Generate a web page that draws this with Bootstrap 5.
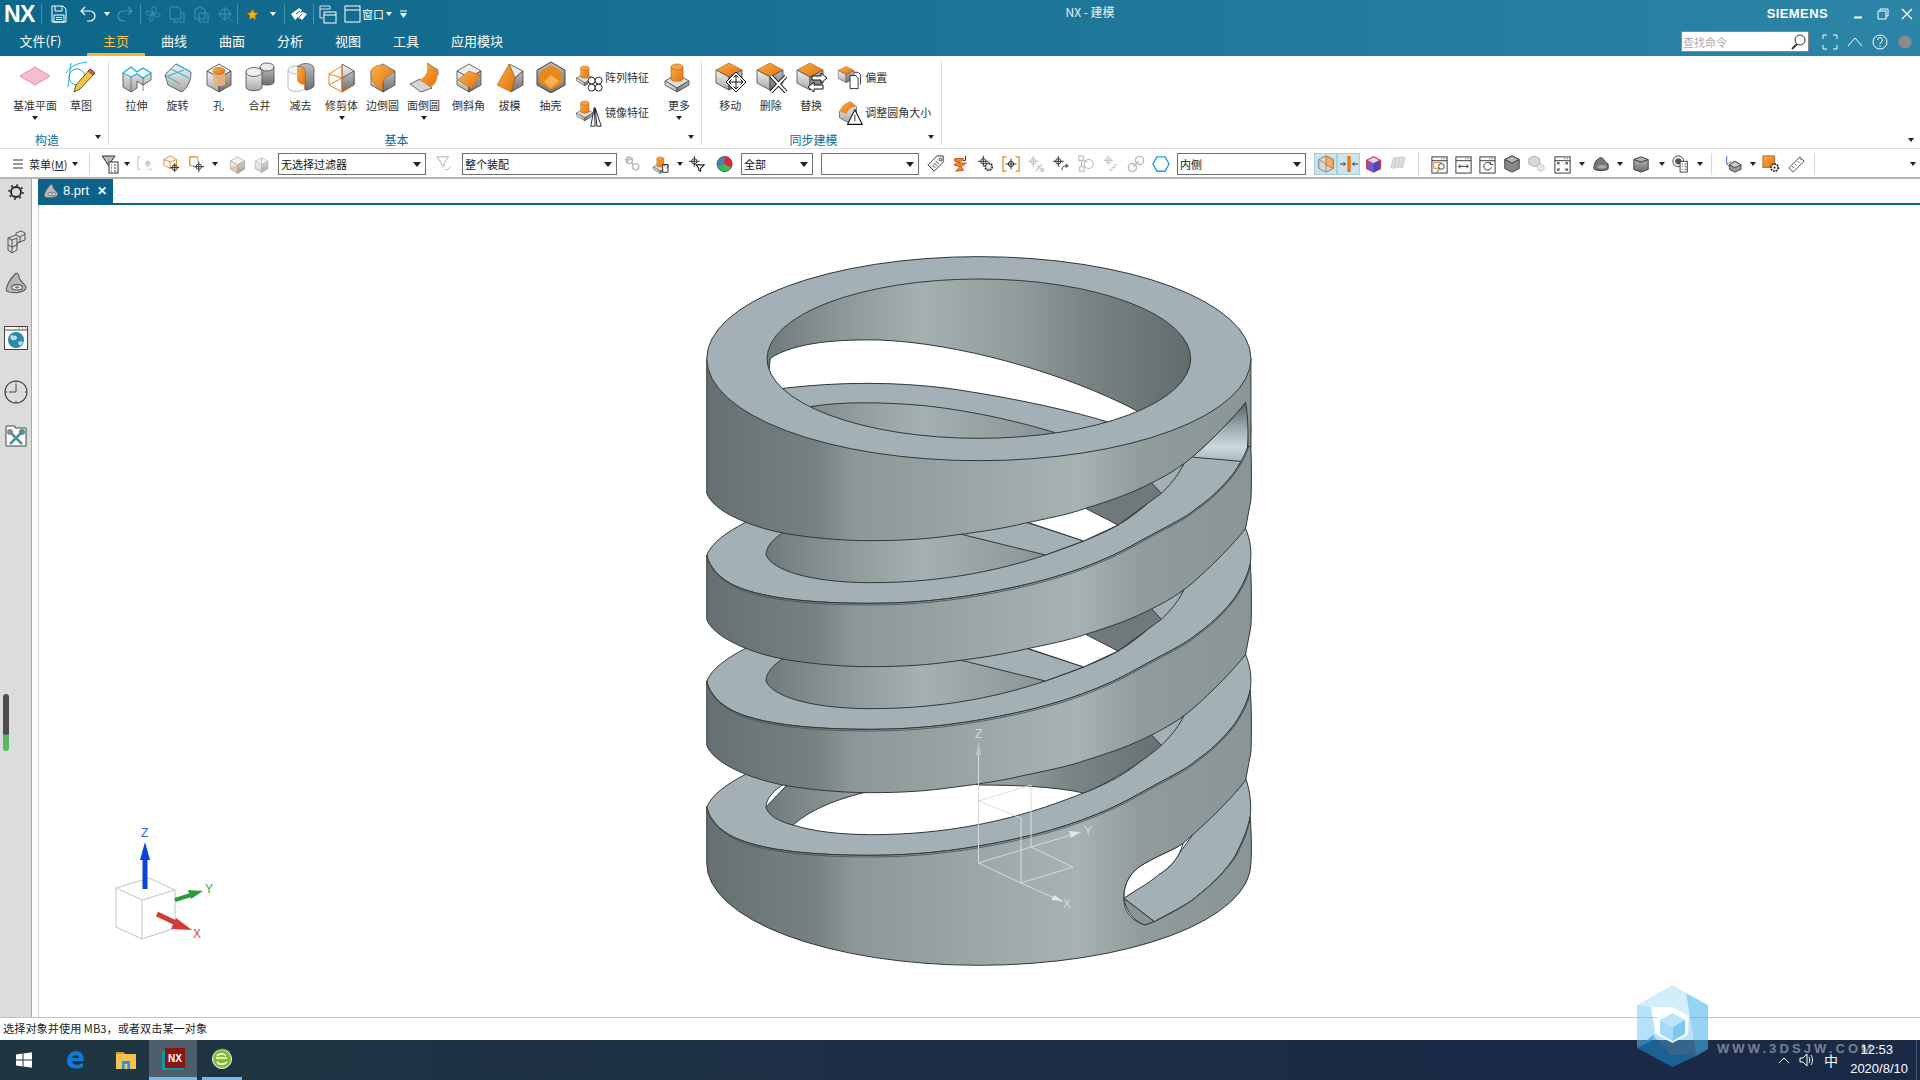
<!DOCTYPE html>
<html lang="en">
<head>
    <meta charset="UTF-8">
    <title>NX - 建模</title>
    <link href="https://cdn.jsdelivr.net/npm/bootstrap@5.3.0/dist/css/bootstrap.min.css" rel="stylesheet">
    <style>
        html, body { height: 1080px; overflow: hidden; }
        body { font-family: "Noto Sans CJK SC", "Liberation Sans", sans-serif; font-size: 11px; color: #333; background: #fff; }
        svg { display: block; flex: none; }
        .defs-only { width: 0; height: 0; position: absolute; }

        /* title + tabs */
        .app-head { height: 56px; background: linear-gradient(90deg, #0d678b, #1c7597 50%, #2c84a6); color: #fff; position: relative; }
        .title-row { height: 28px; }
        .nx-logo { width: 41px; padding-left: 4px; font: bold 23px/28px "Liberation Sans", sans-serif; letter-spacing: -.5px; }
        .qsep { width: 1px; height: 20px; background: rgba(255,255,255,.25); }
        .qi { width: 24px; height: 28px; display: flex; align-items: center; justify-content: center; }
        .qw-34 { width: 34px; } .qw-30 { width: 30px; } .qw-28 { width: 28px; } .qw-20 { width: 20px; }
        .win-label { font-size: 11px; color: #fff; width: 24px; }
        .car-w { width: 0; height: 0; border: 3px solid transparent; border-top: 4px solid #fff; border-bottom: 0; }
        .app-title { position: absolute; left: 260px; right: 0; top: 3px; text-align: center; font-size: 12px; line-height: 18px; color: #e6f2f6; pointer-events: none; }
        .brand { font: bold 13px/28px "Liberation Sans", sans-serif; letter-spacing: .4px; margin-right: 17px; }
        .win-ctl { width: 25px; height: 28px; display: flex; align-items: center; justify-content: center; }
        .win-x { width: 23px; }
        .tab-row { height: 28px; }
        .tab-row .nav-link { padding: 0; height: 28px; line-height: 25px; width: 58px; text-align: center; color: #fff; font-size: 13px; }
        .tab-row .tab-file { width: 73px; margin: 0 10px 0 4px; }
        .tab-row .tab-app { width: 84px; }
        .tab-row .nav-link.active { color: #f6c44d; border-bottom: 3px solid #f3b93c; }
        .find-box { position: relative; width: 128px; height: 21px; margin: -1px 8px 0 0; }
        .find-box .form-control { height: 21px; min-height: 0; padding: 0 20px 0 1px; border: 1px solid #888; border-radius: 0; font-size: 11px; line-height: 19px; }
        .find-box .form-control::placeholder { color: #aaa; }
        .find-box svg { position: absolute; right: 2px; top: 2px; }
        .head-i { width: 25px; display: flex; justify-content: center; margin-top: -1px; }
        .head-gap { width: 3px; }
        .ctl-gap { width: 2px; }

        /* ribbon */
        .ribbon { height: 93px; border-bottom: 1px solid #ddd; position: relative; }
        .rgroup { display: flex; flex-direction: column; border-right: 1px solid #ddd; margin: 5px 0 3px; position: relative; }
        .rg-1 { width: 109px; padding-left: 10px; }
        .rg-2 { width: 593px; padding-left: 7px; }
        .rg-3 { width: 240px; padding-left: 8px; }
        .ritems { height: 72px; display: flex; }
        .rb-item { width: 41px; height: 72px; padding: 0; border: 0; border-radius: 0; font-size: 11px; line-height: 14px; color: #333; display: flex; flex-direction: column; align-items: center; white-space: nowrap; }
        .rb-item span { margin-top: 5px; }
        .rb-wide { width: 50px; }
        .rb-sk { width: 42px; }
        .rb-more { width: 44px; margin-left: 2px; }
        .car-d { width: 0; height: 0; border: 3px solid transparent; border-top: 4px solid #222; border-bottom: 0; flex: none; }
        .rb-item .car-d { margin-top: 4px; }
        .rside { width: 80px; margin-top: -1px; padding-left: 0; }
        .rside-2 { width: 105px; margin-left: 6px; }
        .rrow { height: 35px; display: flex; align-items: center; white-space: nowrap; gap: 2px; }
        .glabel { height: 15px; line-height: 14px; text-align: center; color: #0f6c94; font-size: 12px; padding-right: 24px; }
        .gcar { position: absolute; right: 7px; bottom: 6px; }
        .rib-end { position: absolute; right: 6px; bottom: 6px; }

        /* selection bar */
        .selbar { height: 30px; padding-top: 2px; border-bottom: 2px solid #b4b4b4; }
        .sb-menu { width: 89px; padding-left: 12px; gap: 5px; font-size: 11px; color: #222; }
        .vsep { width: 1px; height: 22px; background: #d6d6d6; flex: none; }
        .tc { height: 26px; display: flex; align-items: center; justify-content: center; flex: none; }
        .u18 { width: 18px; } .u20 { width: 20px; } .u22 { width: 22px; } .u23 { width: 23px; } .u24 { width: 24px; } .u25 { width: 25px; }
        .u26 { width: 26px; } .u28 { width: 28px; } .u30 { width: 30px; } .u32 { width: 32px; }
        .tc-on { height: 22px; background: #cbe4ec; border: 1px solid #a8d0dc; }
        .combo { position: relative; height: 22px; flex: none; }
        .combo .form-select { height: 22px; padding: 0 14px 0 2px; border: 1px solid #707070; border-radius: 0; font-size: 11px; line-height: 20px; color: #111; background: #fff; appearance: none; }
        .combo::after { content: ""; position: absolute; right: 5px; top: 9px; border: 4px solid transparent; border-top: 5px solid #222; border-bottom: 0; }
        .cb-148 { width: 148px; } .cb-155 { width: 155px; } .cb-72 { width: 72px; } .cb-98 { width: 98px; } .cb-129 { width: 129px; }

        /* workspace */
        .workspace { height: 838px; }
        .side-rail { width: 32px; background: #dcdcdc; border-right: 1px solid #a8a8a8; position: relative; }
        .rail-i { display: flex; justify-content: center; }
        .rt-1 { margin-top: 5px; } .rt-2 { margin-top: 30px; } .rt-3 { margin-top: 16px; }
        .rt-4 { margin-top: 30px; } .rt-5 { margin-top: 30px; } .rt-6 { margin-top: 19px; }
        .rail-slider { position: absolute; left: 3px; top: 515px; width: 6px; height: 57px; border-radius: 3px; background: linear-gradient(#4c4c4c 70%, #5cb85c 72%); }
        .work-col { margin-left: 6px; }
        .doc-strip { height: 26px; border-bottom: 2px solid #0c6289; }
        .doc-tab { width: 75px; height: 24px; background: #0c6289; color: #fff; padding-left: 4px; font: 13px/24px "Liberation Sans", sans-serif; gap: 3px; }
        .doc-x { font-size: 12px; font-weight: bold; margin-left: 5px; }
        .view-area { height: 812px; border-left: 1px solid #d4d4d4; background: #fff; }
        .view-area svg { width: 1881px; height: 812px; }
        .view-area path { vector-effect: non-scaling-stroke; }
        .sk { stroke: #2f3739; stroke-width: 1; stroke-linejoin: round; }
        .sk2 { fill: none; stroke: #454e50; stroke-width: .8; }
        .wall { fill: url(#wallG); }
        .inner { fill: url(#innerG); }
        .face { fill: #a3b0b5; }
        .tri-txt { font: 12px "Liberation Sans", sans-serif; }
        .csys-txt { font: 12px "Liberation Sans", sans-serif; fill: #d4d8d8; }
        .csys { stroke: #d8dcdc; stroke-width: 1; fill: none; }

        /* bottom */
        .status-row { height: 23px; border-top: 1px solid #c4c4c4; padding-left: 3px; font-size: 11.2px; line-height: 21px; color: #222; }
        .task-row { height: 40px; background: linear-gradient(90deg, #1f3641, #1b2c46 60%, #1a2946); color: #fff; }
        .tk { height: 40px; display: flex; align-items: center; justify-content: center; }
        .tk-start { width: 48px; } .tk-edge { width: 54px; } .tk-files { width: 47px; }
        .tk-nx { width: 48px; background: #4d5e68; border-bottom: 3px solid #76b9ea; }
        .tk-ie { width: 40px; margin-left: 5px; border-bottom: 3px solid #76b9ea; }
        .tray { width: 150px; position: relative; height: 40px; font: 13px "Liberation Sans", sans-serif; }
        .tray-ic { position: absolute; left: 8px; top: 12px; gap: 9px; }
        .tray-han { font: 14px/16px "Noto Sans CJK SC", sans-serif; }
        .clock-t { position: absolute; right: 27px; top: 2px; line-height: 16px; }
        .clock-d { position: absolute; right: 12px; top: 21px; line-height: 16px; }
        .desk-edge { position: absolute; right: 3px; top: 0; width: 1px; height: 40px; background: #4a586b; }
        .mark-hex { position: absolute; left: 1637px; top: 985px; pointer-events: none; }
        .mark-url { position: absolute; left: 1717px; top: 1041px; font: bold 13px/16px "Liberation Sans", sans-serif; letter-spacing: 3.1px; color: rgba(255,255,255,.42); pointer-events: none; white-space: nowrap; }
    </style>
</head>
<body>
<svg class="defs-only" aria-hidden="true">
    <defs>
        <linearGradient id="gy" x1="0" y1="0" x2="0" y2="1"><stop offset="0" stop-color="#f4f4f4"/><stop offset="1" stop-color="#a8a8a8"/></linearGradient>
        <linearGradient id="gd" x1="0" y1="0" x2="0" y2="1"><stop offset="0" stop-color="#bdbdbd"/><stop offset="1" stop-color="#6e6e6e"/></linearGradient>
        <linearGradient id="og" x1="0" y1="0" x2="1" y2="1"><stop offset="0" stop-color="#f9b04a"/><stop offset="1" stop-color="#e46f0c"/></linearGradient>
        <linearGradient id="wallG" gradientUnits="userSpaceOnUse" x1="70" y1="0" x2="1492" y2="0">
            <stop offset="0" stop-color="#667071"/><stop offset=".2" stop-color="#778182"/><stop offset=".27" stop-color="#8d9798"/>
            <stop offset=".45" stop-color="#98a3a4"/><stop offset=".68" stop-color="#a7b2b3"/><stop offset=".8" stop-color="#909b9c"/><stop offset="1" stop-color="#8a9596"/>
        </linearGradient>
        <linearGradient id="innerG" gradientUnits="userSpaceOnUse" x1="228" y1="0" x2="1335" y2="0">
            <stop offset="0" stop-color="#6f7a7b"/><stop offset=".17" stop-color="#8c9697"/><stop offset=".36" stop-color="#a5b1b1"/>
            <stop offset=".62" stop-color="#8f9899"/><stop offset=".75" stop-color="#7a8485"/><stop offset="1" stop-color="#626c6d"/>
        </linearGradient>
        <linearGradient id="darkG" gradientUnits="userSpaceOnUse" x1="780" y1="0" x2="1240" y2="0">
            <stop offset="0" stop-color="#a0abac"/><stop offset=".5" stop-color="#7c8687"/><stop offset="1" stop-color="#687273"/>
        </linearGradient>
        <linearGradient id="slitG" gradientUnits="userSpaceOnUse" x1="0" y1="487" x2="0" y2="665">
            <stop offset="0" stop-color="#555f60"/><stop offset=".45" stop-color="#9fb0b4"/><stop offset=".75" stop-color="#ccd9de"/><stop offset="1" stop-color="#a8b6bb"/>
        </linearGradient>

        <g id="cube-g"><polygon points="16,3 28,10 16,17 4,10" fill="#ececec" stroke="#444" stroke-width=".8"/><polygon points="4,10 16,17 16,31 4,24" fill="url(#gy)" stroke="#444" stroke-width=".8"/><polygon points="16,17 28,10 28,24 16,31" fill="url(#gd)" stroke="#444" stroke-width=".8"/></g>
        <g id="cube-o"><polygon points="13,2 26,9 13,16 0,9" fill="url(#og)" stroke="#a85a10" stroke-width=".6" transform="translate(2 0)"/><polygon points="2,9 15,16 15,29 2,22" fill="url(#gy)" stroke="#444" stroke-width=".8"/><polygon points="15,16 28,9 28,22 15,29" fill="url(#gd)" stroke="#444" stroke-width=".8"/></g>
        <g id="block-cyl"><polygon points="2,20 14,13 26,20 14,27" fill="#ddd" stroke="#444" stroke-width=".8"/><polygon points="2,20 14,27 14,31 2,24" fill="url(#gy)" stroke="#444" stroke-width=".8"/><polygon points="14,27 26,20 26,24 14,31" fill="url(#gd)" stroke="#444" stroke-width=".8"/><path d="M8 6v12c0 3 12 3 12 0V6z" fill="url(#og)" stroke="#a85a10" stroke-width=".6"/><ellipse cx="14" cy="6" rx="6" ry="3" fill="#f6a33a" stroke="#a85a10" stroke-width=".6"/></g>

        <symbol id="r-plane" viewBox="0 0 32 32"><polygon points="1,15 16,6 31,15 16,24" fill="#f7bcd2" stroke="#e88aaa"/></symbol>
        <symbol id="r-sketch" viewBox="0 0 32 32"><path d="M1 12C6 5 12 2 22 1M6 2 3 26" fill="none" stroke="#17b3da"/><circle cx="12" cy="16" r="8" fill="none" stroke="#17b3da"/><polygon points="25,8 30,12 15,28 9,31 11,24" fill="#f5c63c" stroke="#333" stroke-width=".8"/><polygon points="25,8 30,12 28,14 23,10" fill="#e55" stroke="#333" stroke-width=".6"/></symbol>
        <symbol id="r-extrude" viewBox="0 0 32 32"><path d="M2 12v14l8 5 6-4v-7l6 4 8-5V12L22 7l-6 4-6-5z" fill="url(#gy)" stroke="#444" stroke-width=".8"/><path d="M2 12 10 6l6 5 6-4 8 5-8 5-6-4-6 3z" fill="#eef8fb" stroke="#19b3d9" stroke-width="1.100"/><path d="M10 31V16M22 30V17" stroke="#555" stroke-width=".7"/></symbol>
        <symbol id="r-revolve" viewBox="0 0 32 32"><path d="M3 14C8 8 11 6 14 3l15 8c0 10-4 16-9 20L6 24z" fill="url(#gy)" stroke="#444" stroke-width=".8"/><path d="M6 15 22 9M9 8l18 9M14 3l15 8M3 14l15 9" fill="none" stroke="#19b3d9"/></symbol>
        <symbol id="r-hole" viewBox="0 0 32 32"><use href="#cube-g"/><path d="M10 10v13c0 3 12 3 12 0V10z" fill="#e8b27c" opacity=".9"/><ellipse cx="16" cy="10" rx="6" ry="3.500" fill="url(#og)" stroke="#a85a10" stroke-width=".5"/></symbol>
        <symbol id="r-unite" viewBox="0 0 32 32"><path d="M16 6v15c0 4 14 4 14 0V6z" fill="url(#gd)" stroke="#444" stroke-width=".8"/><ellipse cx="23" cy="6" rx="7" ry="4" fill="#e8e8e8" stroke="#444" stroke-width=".8"/><path d="M2 11v15c0 5 16 5 16 0V11z" fill="url(#gy)" stroke="#444" stroke-width=".8"/><ellipse cx="10" cy="11" rx="8" ry="4.500" fill="#f0f0f0" stroke="#444" stroke-width=".8"/></symbol>
        <symbol id="r-subtract" viewBox="0 0 32 32"><path d="M3 9v17c0 6 17 6 17 0V9z" fill="#fff" stroke="#bbb"/><ellipse cx="11" cy="9" rx="8" ry="4" fill="#f4f4f4" stroke="#bbb"/><path d="M12 6c8-7 18-2 17 2v17c-1 2-5 4-9 4V10c0-3-3-5-8-4z" fill="url(#gd)" stroke="#444" stroke-width=".7"/><path d="M12 6c5-1 8 2 8 5v13c-2 0-8-2-8-5z" fill="url(#og)"/></symbol>
        <symbol id="r-trim" viewBox="0 0 32 32"><polygon points="16,3 28,10 28,24 16,17" fill="url(#gy)" stroke="#444" stroke-width=".8"/><polygon points="16,17 28,10 28,24 16,31" fill="url(#gd)" stroke="#444" stroke-width=".8"/><path d="M3 13 16 5v12L3 24zM3 13l13 4M3 24l13 7 12-7M16 17v14" fill="none" stroke="#e8811c"/></symbol>
        <symbol id="r-eblend" viewBox="0 0 32 32"><use href="#cube-g"/><path d="M4 12C4 6 10 4 15 4l13 7-9 5c-3 2-4 8-3 13-7-1-12-10-12-17z" fill="url(#og)" stroke="#a85a10" stroke-width=".5"/></symbol>
        <symbol id="r-fblend" viewBox="0 0 32 32"><polygon points="2,23 12,18 24,27 13,31" fill="#d6d6d6" stroke="#444" stroke-width=".8"/><polygon points="19,2 30,9 30,14 24,8" fill="#ddd" stroke="#444" stroke-width=".8"/><path d="M19 2c1 10-1 14-8 17l12 7c6-4 7-10 7-17z" fill="url(#og)"/></symbol>
        <symbol id="r-chamfer" viewBox="0 0 32 32"><use href="#cube-g"/><polygon points="5,19 16,10 27,14 19,28" fill="url(#og)" stroke="#a85a10" stroke-width=".5"/></symbol>
        <symbol id="r-draft" viewBox="0 0 32 32"><polygon points="15,3 29,10 21,17" fill="#e8e8e8" stroke="#444" stroke-width=".8"/><polygon points="21,17 29,10 29,24 17,31" fill="url(#gd)" stroke="#444" stroke-width=".8"/><polygon points="15,3 21,17 17,31 3,24" fill="url(#og)" stroke="#a85a10" stroke-width=".5"/></symbol>
        <symbol id="r-shell" viewBox="0 0 32 32"><polygon points="16,1 30,9 30,24 16,32 2,24 2,9" fill="url(#gd)" stroke="#444"/><polygon points="16,4 27,11 27,22 16,29 5,22 5,11" fill="#e88818"/><polygon points="9,21 16,14 24,20 16,27" fill="#f8b058"/></symbol>
        <symbol id="r-pattern" viewBox="0 0 32 32"><use href="#block-cyl" transform="scale(.8)"/><g fill="#fff" stroke="#111"><circle cx="19" cy="19" r="4"/><circle cx="27" cy="19" r="4"/><circle cx="19" cy="27" r="4"/><circle cx="27" cy="27" r="4"/></g></symbol>
        <symbol id="r-mirror" viewBox="0 0 32 32"><use href="#block-cyl" transform="scale(.8)"/><path d="M18 31 22 10l1 21zM25 31l-2-21 7 21z" fill="#fff" stroke="#111"/></symbol>
        <symbol id="r-more" viewBox="0 0 32 32"><use href="#block-cyl"/></symbol>
        <symbol id="r-move" viewBox="0 0 32 32"><use href="#cube-o"/><polygon points="22,11 32,21 22,31 12,21" fill="#fff" stroke="#111"/><path d="M22 14v14M15 21h14M19.500 16.500 22 14l2.500 2.500M19.500 25.500 22 28l2.500-2.500M17.500 18.500 15 21l2.500 2.500M26.500 18.500 29 21l-2.500 2.500" fill="none" stroke="#111"/></symbol>
        <symbol id="r-del" viewBox="0 0 32 32"><use href="#cube-o"/><path d="M16 15 31 31M31 15 16 31" stroke="#111" stroke-width="4"/><path d="M16 15 31 31M31 15 16 31" stroke="#fff" stroke-width="2"/></symbol>
        <symbol id="r-rep" viewBox="0 0 32 32"><use href="#cube-o"/><path d="M17 15h9v-3l6 5-6 5v-3h-9zM28 24h-9v-3l-6 5 6 5v-3h9z" fill="#fff" stroke="#111"/></symbol>
        <symbol id="r-offset" viewBox="0 0 32 32"><use href="#cube-o" transform="scale(.75)"/><path d="M16 13h7l3 3v13h-10z" fill="#fff" stroke="#111"/><path d="M21 9h5l3 3v12" fill="none" stroke="#111"/></symbol>
        <symbol id="r-resize" viewBox="0 0 32 32"><polygon points="3,14 16,2 24,8 24,16 14,28 3,22" fill="url(#gy)" stroke="#444" stroke-width=".8"/><path d="M3 14C4 9 10 3 16 2l7 6C18 9 13 12 12 17z" fill="url(#og)"/><polygon points="22,12 31,30 13,30" fill="#fff" stroke="#111" stroke-width="1.300"/><path d="M22 18v8" stroke="#111"/></symbol>

        <symbol id="t-flist" viewBox="0 0 20 20"><path d="M1 2h13L9 9v3L6 10V9z" fill="#bbb" stroke="#333"/><rect x="8" y="8" width="9" height="11" fill="#fff" stroke="#333"/><path d="M10 11h1M13 11h2M10 14h1M13 14h2M10 17h1M13 17h2" stroke="#333"/></symbol>
        <symbol id="t-bkt" viewBox="0 0 20 20"><g fill="none" stroke="#bbb"><path d="M4 2H1v14h3M9 9h6M12 6v7"/><circle cx="12" cy="9.500" r="2.500"/><path d="M12 16c3 1 4 0 5-2"/></g></symbol>
        <symbol id="t-ocross" viewBox="0 0 20 20"><g fill="none" stroke="#e8811c"><path d="M8 1 15 5v7l-7 3-7-4V5zM1 5l7 3 7-3M8 8v7"/></g><g fill="none" stroke="#222"><circle cx="13" cy="14" r="3"/><path d="M13 9v10M8 14h10"/></g></symbol>
        <symbol id="t-scross" viewBox="0 0 20 20"><path d="M11 2H2v10" fill="none" stroke="#e8811c" stroke-width="1.400"/><path d="M2 12h5M11 2v5" fill="none" stroke="#e8811c"/><g fill="none" stroke="#222"><circle cx="12" cy="13" r="3"/><path d="M12 7v12M6 13h12"/></g></symbol>
        <symbol id="t-cube-fade" viewBox="0 0 32 32"><g opacity=".65"><use href="#cube-g"/><path d="M6 24 26 12" stroke="#e8811c" stroke-width="2"/></g></symbol>
        <symbol id="t-cube-fade2" viewBox="0 0 32 32"><g opacity=".6"><use href="#cube-g"/><path d="M16 4v26" stroke="#e8811c" stroke-width="2"/></g></symbol>
        <symbol id="t-funnel" viewBox="0 0 20 20"><path d="M2 2h13L10 9v4L7 11V9z" fill="none" stroke="#aaa"/><path d="M17 13c-1 3-4 4-6 3" fill="none" stroke="#aaa"/></symbol>
        <symbol id="t-chain" viewBox="0 0 20 20"><g fill="none" stroke="#bbb" stroke-width="1.500"><circle cx="6" cy="6" r="3.500"/><circle cx="13" cy="13" r="3.500"/><path d="M8 8l3 3M4 1v9M1 5h9"/></g></symbol>
        <symbol id="t-blockdoc" viewBox="0 0 32 32"><use href="#block-cyl"/><path d="M18 16h9v13h-9z" fill="#fff" stroke="#111" stroke-width="1.400"/><path d="M24 22a3 3 0 1 0-3-3" fill="none" stroke="#111"/></symbol>
        <symbol id="t-crossf" viewBox="0 0 20 20"><g fill="none" stroke="#222"><circle cx="7" cy="7" r="3"/><path d="M7 1v12M1 7h12"/><path d="M9 11h9l-4 4v3l-2-1v-2z" stroke-width="1.200"/></g></symbol>
        <symbol id="t-pie" viewBox="0 0 20 20"><circle cx="10" cy="10" r="9" fill="#4d84a8"/><path d="M10 10V1a9 9 0 0 1 7.800 13.500z" fill="#e8213a"/><path d="M10 10l7.800 4.500A9 9 0 0 1 2.200 14.500z" fill="#2fc44a"/><circle cx="10" cy="10" r="9" fill="none" stroke="#444" stroke-width=".6"/></symbol>
        <symbol id="t-tag" viewBox="0 0 20 20"><path d="M1 11 11 1h7v7L8 18z" fill="#f1f1f1" stroke="#333"/><circle cx="15" cy="5" r="1.500" fill="none" stroke="#333"/><path d="M6 11l3 3M8 9l3 3M10 7l3 3" stroke="#333"/></symbol>
        <symbol id="t-curve" viewBox="0 0 20 20"><path d="M3 4h10l-5 5h8l-6 4 3 4-9 1 5-5-7-2 6-4H3z" fill="#f28a1c" stroke="#d6401c"/><path d="M15 1v5h-3" fill="none" stroke="#222"/></symbol>
        <symbol id="t-gearx" viewBox="0 0 20 20"><g fill="none" stroke="#222"><circle cx="7" cy="7" r="3"/><path d="M7 1v12M1 7h12"/></g><circle cx="13" cy="13" r="4" fill="#ccc" stroke="#222" stroke-width="1.800" stroke-dasharray="2 1"/><circle cx="13" cy="13" r="1.500" fill="#fff"/></symbol>
        <symbol id="t-brk" viewBox="0 0 20 20"><path d="M5 2H1v16h4M15 2h4v16h-4" fill="none" stroke="#e8811c" stroke-width="1.300"/><g fill="none" stroke="#222"><circle cx="10" cy="10" r="3"/><path d="M10 4v12M4 10h12"/></g></symbol>
        <symbol id="t-xmove" viewBox="0 0 20 20"><g fill="none" stroke="#bbb"><circle cx="7" cy="7" r="3"/><path d="M7 1v12M1 7h12M11 11l7 7M14 18h4v-4M17 10l-7 8" stroke-width="1.200"/></g></symbol>
        <symbol id="t-xturn" viewBox="0 0 20 20"><g fill="none" stroke="#222"><circle cx="7" cy="7" r="3"/><path d="M7 1v12M1 7h12M11 17c0-4 2-5 6-5M15 10l3 2-3 2"/></g></symbol>
        <symbol id="t-nodes" viewBox="0 0 20 20"><g fill="none" stroke="#bbb" stroke-width="1.200"><rect x="2" y="1" width="5" height="5"/><circle cx="13" cy="10" r="5"/><rect x="3" y="13" width="5" height="5"/><path d="M5 6v7M7 5l4 3"/></g></symbol>
        <symbol id="t-xstep" viewBox="0 0 20 20"><g fill="none" stroke="#bbb"><circle cx="7" cy="6" r="3"/><path d="M7 1v10M2 6h10M8 17h3v-3h3v-3h3"/></g></symbol>
        <symbol id="t-link" viewBox="0 0 20 20"><g fill="none" stroke="#bbb" stroke-width="1.600"><circle cx="6" cy="14" r="4.500"/><circle cx="14" cy="6" r="4.500"/><path d="M7 13l6-6"/></g></symbol>
        <symbol id="t-hex" viewBox="0 0 20 20"><polygon points="5.500,2 14.500,2 19,10 14.500,18 5.500,18 1,10" fill="#fff" stroke="#12a7d8" stroke-width="1.500"/></symbol>
        <symbol id="t-corner" viewBox="0 0 20 20"><polygon points="10,1 18,5 18,15 10,19 2,15 2,5" fill="#d9d9d9" stroke="#777"/><path d="M10 1l8 4v10l-8-4z" fill="#f1b06a" stroke="#d86c10"/><path d="M2 5l8 5v9" fill="none" stroke="#888"/></symbol>
        <symbol id="t-midbar" viewBox="0 0 20 20"><rect x="8" y="1" width="4" height="18" fill="#f07d10"/><path d="M0 10h6M14 10h6M4 8l2 2-2 2M16 8l-2 2 2 2" fill="none" stroke="#222"/></symbol>
        <symbol id="t-redcube" viewBox="0 0 20 20"><polygon points="10,1 18,5 18,15 10,19 2,15 2,5" fill="#6b5fd6" stroke="#e8213a" stroke-width="1.300"/><polygon points="2,5 10,1 18,5 10,9" fill="#cfd8f5" stroke="#e8213a"/><polygon points="10,9 18,5 18,15 10,19" fill="#3f4fc0" stroke="#e8213a"/></symbol>
        <symbol id="t-sheet" viewBox="0 0 20 20"><path d="M5 3c5 1 9-2 13 0l-3 11c-4-2-8 2-13 0z" fill="#ddd" stroke="#c8c8c8"/><path d="M8 3 6 14M12 3l-2 11" stroke="#c8c8c8"/></symbol>
        <g id="win-frame"><rect x="2" y="2" width="16" height="17" fill="#fff" stroke="#333"/><path d="M2 6h16" stroke="#333"/><path d="M12 4h1M14.500 4h1" stroke="#333"/></g>
        <symbol id="t-w-zoom" viewBox="0 0 20 20"><use href="#win-frame"/><rect x="4" y="8" width="8" height="6" fill="none" stroke="#e8811c"/><circle cx="12" cy="12" r="3" fill="#fff" stroke="#333"/><path d="M10 15l-3 3" stroke="#333"/></symbol>
        <symbol id="t-w-pan" viewBox="0 0 20 20"><use href="#win-frame"/><path d="M5 12h10M7 10l-2 2 2 2M13 10l2 2-2 2" fill="none" stroke="#333"/></symbol>
        <symbol id="t-w-rot" viewBox="0 0 20 20"><use href="#win-frame"/><path d="M13 9a4 4 0 1 0 1 4M13 7v3h3" fill="none" stroke="#333"/></symbol>
        <symbol id="t-cubed" viewBox="0 0 20 20"><polygon points="10,1 18,5 18,15 10,19 2,15 2,5" fill="#888" stroke="#333"/><polygon points="2,5 10,1 18,5 10,9" fill="#b8b8b8" stroke="#333"/></symbol>
        <symbol id="t-cubes" viewBox="0 0 20 20"><g opacity=".45"><polygon points="7,1 13,4 13,10 7,13 1,10 1,4" fill="#aaa" stroke="#444"/><circle cx="14" cy="14" r="4" fill="#ccc" stroke="#444" stroke-dasharray="2 1"/></g></symbol>
        <symbol id="t-w-fit" viewBox="0 0 20 20"><use href="#win-frame"/><path d="M5 10V8h2M13 8h2v2M5 14v2h2M13 16h2v-2M7 10l-2-2M13 10l2-2M7 14l-2 2M13 14l2 2" fill="none" stroke="#333"/></symbol>
        <symbol id="t-shade" viewBox="0 0 20 20"><path d="M2 15C2 9 6 3 10 3c3 0 4 5 8 7v5c0 3-16 3-16 0z" fill="#777" stroke="#333"/><ellipse cx="11" cy="13" rx="5" ry="2" fill="#aaa"/></symbol>
        <symbol id="t-cyl" viewBox="0 0 20 20"><path d="M2 5v11l8 3 8-3V5l-8-3z" fill="url(#gd)" stroke="#333"/><path d="M2 5l8 3 8-3" fill="none" stroke="#333"/></symbol>
        <symbol id="t-eyelist" viewBox="0 0 20 20"><circle cx="7" cy="7" r="6" fill="#fff" stroke="#333"/><circle cx="7" cy="7" r="3.500" fill="#555"/><rect x="9" y="7" width="8" height="12" fill="#fff" stroke="#333"/><path d="M11 10h1M14 10h2M11 13h1M14 13h2M11 16h1M14 16h2" stroke="#333"/></symbol>
        <symbol id="t-axis" viewBox="0 0 20 20"><path d="M3 1v9" stroke="#2a63e6"/><path d="M3 10l6-3" stroke="#2fb84a"/><path d="M3 10l5 4" stroke="#e8213a"/><polygon points="12,7 19,11 19,16 12,19 6,16 6,11" fill="#999" stroke="#444"/><polygon points="6,11 12,7 19,11 12,14" fill="#ccc" stroke="#444"/></symbol>
        <symbol id="t-ogear" viewBox="0 0 20 20"><rect x="1" y="1" width="13" height="13" fill="url(#og)" stroke="#c45f08"/><circle cx="14" cy="14" r="4" fill="#fff" stroke="#222" stroke-width="2" stroke-dasharray="2 1"/><circle cx="14" cy="14" r="1.200" fill="#222"/></symbol>
        <symbol id="t-ruler" viewBox="0 0 20 20"><path d="M1 14 14 1l5 5L6 19z" fill="#fff" stroke="#333"/><path d="M5 12l2 2M8 9l2 2M11 6l2 2M14 3l2 2" stroke="#333"/></symbol>

        <symbol id="t-part" viewBox="0 0 24 24"><path d="M3 19 C3 14 7 8 12 3c2 0 3 2 3 5l6 7c1 3-2 5-8 6-5 0-9 0-10-2z" fill="#b9b9b9" stroke="#555"/><ellipse cx="13" cy="16" rx="5" ry="2.500" fill="#e8e8e8" stroke="#555"/><ellipse cx="13" cy="16" rx="2" ry="1" fill="#4d84a8"/></symbol>
    </defs>
</svg>

<header class="app-head">
    <div class="title-row d-flex align-items-center">
        <div class="nx-logo">NX</div>
        <div class="qsep"></div>
        <div class="qi qw-34"><svg width="16" height="18" viewBox="0 0 16 18"><path d="M1 1h11l3 3v13H1z" fill="none" stroke="#fff"/><path d="M4 1v5h7V1M3 10h10v7H3z" fill="none" stroke="#fff"/><path d="M5 12.500h6M5 14.500h6" stroke="#fff"/></svg></div>
        <div class="qi"><svg width="18" height="16" viewBox="0 0 18 16"><path d="M2 5h9a5 5 0 0 1 0 10H8M6 1 2 5l4 4" fill="none" stroke="#fff" stroke-width="1.200"/></svg></div>
        <div class="car-w ms-1"></div>
        <div class="qi qw-30"><svg width="18" height="16" viewBox="0 0 18 16"><path d="M16 5H7a5 5 0 0 0 0 10h3M12 1l4 4-4 4" fill="none" stroke="#3f95b6" stroke-width="1.200"/></svg></div>
        <div class="qsep"></div>
        <div class="qi"><svg width="16" height="16" viewBox="0 0 16 16"><g fill="none" stroke="#3f95b6"><path d="M8 8C6 2 7 1 9 1s3 2-1 7c5-2 7-1 7 1s-3 3-7-1c1 5 0 7-2 7S3 13 8 8C3 10 1 9 1 7s3-3 7 1z"/></g></svg></div>
        <div class="qi"><svg width="16" height="17" viewBox="0 0 16 17"><path d="M1 1h8l3 3v9H1zM5 13v3h10V7h-3" fill="none" stroke="#3f95b6"/></svg></div>
        <div class="qi"><svg width="16" height="17" viewBox="0 0 16 17"><path d="M2 3h3V1h4v2h3v10H2zM6 7h9v9H6z" fill="none" stroke="#3f95b6"/></svg></div>
        <div class="qi"><svg width="17" height="17" viewBox="0 0 17 17"><g fill="none" stroke="#3f95b6"><circle cx="8" cy="8" r="5"/><path d="M8 1v14M1 8h14M11 11l5 5"/></g></svg></div>
        <div class="qsep"></div>
        <div class="qi qw-28"><svg width="13" height="13" viewBox="0 0 20 20"><polygon points="10,1 12.600,7 19,7.500 14,12 15.600,18.500 10,15 4.400,18.500 6,12 1,7.500 7.400,7" fill="#f6b31a" stroke="#8a5a00"/></svg></div>
        <div class="car-w ms-1"></div>
        <div class="qsep ms-2"></div>
        <div class="qi qw-28"><svg width="18" height="16" viewBox="0 0 18 16"><path d="M1 8 9 2l3 2-2 3 3-1 4 2-5 6-4-3-3 3z" fill="#fff"/><path d="M6 8l4-3M9 11l3-3" stroke="#0d678b"/></svg></div>
        <div class="qsep"></div>
        <div class="qi qw-28"><svg width="18" height="19" viewBox="0 0 18 19"><path d="M1 1h10v3M1 1v12h3M1 4h10" fill="none" stroke="#d4e6ec"/><rect x="5" y="7" width="12" height="11" fill="none" stroke="#fff"/><path d="M5 10h12" stroke="#fff"/></svg></div>
        <div class="qi qw-20"><svg width="17" height="18" viewBox="0 0 17 18"><rect x="1" y="1" width="15" height="16" fill="none" stroke="#fff"/><path d="M1 5h15" stroke="#fff"/></svg></div>
        <div class="win-label">窗口</div>
        <div class="car-w"></div>
        <div class="ms-2"><svg width="7" height="8" viewBox="0 0 7 8"><path d="M0 1h7" stroke="#fff"/><path d="M0 3h7L3.500 8z" fill="#fff"/></svg></div>
        <div class="app-title">NX - 建模</div>
        <div class="brand ms-auto">SIEMENS</div>
        <div class="win-ctl"><svg width="10" height="10" viewBox="0 0 10 10"><path d="M1 8.500h8" stroke="#fff" stroke-width="2"/></svg></div>
        <div class="win-ctl"><svg width="12" height="12" viewBox="0 0 12 12"><path d="M3 3V1h8v7H9M1 3h8v8H1z" fill="none" stroke="#fff"/></svg></div>
        <div class="win-ctl win-x"><svg width="12" height="12" viewBox="0 0 12 12"><path d="M1 1l10 10M11 1 1 11" stroke="#fff" stroke-width="1.300"/></svg></div>
        <div class="ctl-gap"></div>
    </div>
    <div class="tab-row d-flex align-items-center">
        <nav class="nav flex-nowrap">
            <a class="nav-link tab-file" href="#">文件(F)</a>
            <a class="nav-link active" href="#">主页</a>
            <a class="nav-link" href="#">曲线</a>
            <a class="nav-link" href="#">曲面</a>
            <a class="nav-link" href="#">分析</a>
            <a class="nav-link" href="#">视图</a>
            <a class="nav-link" href="#">工具</a>
            <a class="nav-link tab-app" href="#">应用模块</a>
        </nav>
        <div class="find-box ms-auto">
            <input class="form-control" type="text" placeholder="查找命令">
            <svg width="17" height="17" viewBox="0 0 17 17"><circle cx="10" cy="7" r="5" fill="#fff" stroke="#333"/><path d="M7 11l-5 5" stroke="#333" stroke-width="1.800"/></svg>
        </div>
        <div class="head-i"><svg width="16" height="16" viewBox="0 0 16 16"><path d="M1 5V1h4M11 1h4v4M15 11v4h-4M5 15H1v-4" fill="none" stroke="#fff"/></svg></div>
        <div class="head-i"><svg width="16" height="10" viewBox="0 0 16 10"><path d="M1 9l7-8 7 8" fill="none" stroke="#fff"/></svg></div>
        <div class="head-i"><svg width="16" height="16" viewBox="0 0 16 16"><circle cx="8" cy="8" r="7" fill="none" stroke="#fff"/><path d="M5.500 6a2.500 2.500 0 1 1 3.500 2.300c-.8.400-1 .8-1 1.700M8 11.500v1.500" fill="none" stroke="#fff"/></svg></div>
        <div class="head-i"><svg width="14" height="14" viewBox="0 0 14 14"><circle cx="7" cy="7" r="6.500" fill="#8c8c8c"/></svg></div>
        <div class="head-gap"></div>
    </div>
</header>

<section class="ribbon d-flex">
    <div class="rgroup rg-1">
        <div class="ritems">
            <button class="btn rb-item rb-wide" type="button"><svg width="32" height="32"><use href="#r-plane"/></svg><span>基准平面</span><i class="car-d"></i></button>
            <button class="btn rb-item rb-sk" type="button"><svg width="32" height="32"><use href="#r-sketch"/></svg><span>草图</span></button>
        </div>
        <div class="glabel">构造</div>
        <i class="car-d gcar"></i>
    </div>
    <div class="rgroup rg-2">
        <div class="ritems">
            <button class="btn rb-item" type="button"><svg width="32" height="32"><use href="#r-extrude"/></svg><span>拉伸</span></button>
            <button class="btn rb-item" type="button"><svg width="32" height="32"><use href="#r-revolve"/></svg><span>旋转</span></button>
            <button class="btn rb-item" type="button"><svg width="32" height="32"><use href="#r-hole"/></svg><span>孔</span></button>
            <button class="btn rb-item" type="button"><svg width="32" height="32"><use href="#r-unite"/></svg><span>合并</span></button>
            <button class="btn rb-item" type="button"><svg width="32" height="32"><use href="#r-subtract"/></svg><span>减去</span></button>
            <button class="btn rb-item" type="button"><svg width="32" height="32"><use href="#r-trim"/></svg><span>修剪体</span><i class="car-d"></i></button>
            <button class="btn rb-item" type="button"><svg width="32" height="32"><use href="#r-eblend"/></svg><span>边倒圆</span></button>
            <button class="btn rb-item" type="button"><svg width="32" height="32"><use href="#r-fblend"/></svg><span>面倒圆</span><i class="car-d"></i></button>
            <button class="btn rb-item ms-1" type="button"><svg width="32" height="32"><use href="#r-chamfer"/></svg><span>倒斜角</span></button>
            <button class="btn rb-item" type="button"><svg width="32" height="32"><use href="#r-draft"/></svg><span>拔模</span></button>
            <button class="btn rb-item" type="button"><svg width="32" height="32"><use href="#r-shell"/></svg><span>抽壳</span></button>
            <div class="rside ms-1">
                <div class="rrow"><svg width="28" height="28"><use href="#r-pattern"/></svg><span>阵列特征</span></div>
                <div class="rrow"><svg width="28" height="28"><use href="#r-mirror"/></svg><span>镜像特征</span></div>
            </div>
            <button class="btn rb-item rb-more" type="button"><svg width="32" height="32"><use href="#r-more"/></svg><span>更多</span><i class="car-d"></i></button>
        </div>
        <div class="glabel">基本</div>
        <i class="car-d gcar"></i>
    </div>
    <div class="rgroup rg-3">
        <div class="ritems">
            <button class="btn rb-item" type="button"><svg width="32" height="32"><use href="#r-move"/></svg><span>移动</span></button>
            <button class="btn rb-item" type="button"><svg width="32" height="32"><use href="#r-del"/></svg><span>删除</span></button>
            <button class="btn rb-item" type="button"><svg width="32" height="32"><use href="#r-rep"/></svg><span>替换</span></button>
            <div class="rside rside-2">
                <div class="rrow"><svg width="26" height="28"><use href="#r-offset"/></svg><span>偏置</span></div>
                <div class="rrow"><svg width="26" height="28"><use href="#r-resize"/></svg><span>调整圆角大小</span></div>
            </div>
        </div>
        <div class="glabel">同步建模</div>
        <i class="car-d gcar"></i>
    </div>
    <i class="car-d rib-end"></i>
</section>

<section class="selbar d-flex align-items-center">
    <div class="sb-menu d-flex align-items-center">
        <svg width="12" height="10" viewBox="0 0 12 10"><path d="M1 1h10M1 5h10M1 9h10" stroke="#333"/></svg>
        <span>菜单(<u>M</u>)</span><i class="car-d"></i>
    </div>
    <div class="vsep"></div>
    <div class="tc u26 ms-2"><svg width="20" height="20"><use href="#t-flist"/></svg></div><i class="car-d"></i>
    <div class="tc u24 ms-1"><svg width="18" height="18"><use href="#t-bkt"/></svg></div>
    <div class="tc u28"><svg width="18" height="18"><use href="#t-ocross"/></svg></div>
    <div class="tc u22"><svg width="18" height="18"><use href="#t-scross"/></svg></div><i class="car-d ms-1"></i>
    <div class="tc u30 ms-1"><svg width="19" height="19"><use href="#t-cube-fade"/></svg></div>
    <div class="tc u18"><svg width="17" height="19"><use href="#t-cube-fade2"/></svg></div>
    <div class="combo cb-148 ms-2"><select class="form-select"><option>无选择过滤器</option></select></div>
    <div class="tc u28 ms-1"><svg width="18" height="18"><use href="#t-funnel"/></svg></div>
    <div class="combo cb-155 ms-1"><select class="form-select"><option>整个装配</option></select></div>
    <div class="tc u32"><svg width="18" height="18"><use href="#t-chain"/></svg></div>
    <div class="tc u24"><svg width="19" height="19"><use href="#t-blockdoc"/></svg></div><i class="car-d ms-1"></i>
    <div class="tc u28"><svg width="18" height="18"><use href="#t-crossf"/></svg></div>
    <div class="tc u26"><svg width="17" height="18"><use href="#t-pie"/></svg></div>
    <div class="combo cb-72 ms-1"><select class="form-select"><option>全部</option></select></div>
    <div class="combo cb-98 ms-2"><select class="form-select"><option></option></select></div>
    <div class="tc u25 ms-1"><svg width="18" height="18"><use href="#t-tag"/></svg></div>
    <div class="tc u25"><svg width="18" height="18"><use href="#t-curve"/></svg></div>
    <div class="tc u25"><svg width="18" height="18"><use href="#t-gearx"/></svg></div>
    <div class="tc u25"><svg width="18" height="18"><use href="#t-brk"/></svg></div>
    <div class="tc u25"><svg width="18" height="18"><use href="#t-xmove"/></svg></div>
    <div class="tc u25"><svg width="18" height="18"><use href="#t-xturn"/></svg></div>
    <div class="tc u25"><svg width="18" height="18"><use href="#t-nodes"/></svg></div>
    <div class="tc u25"><svg width="18" height="18"><use href="#t-xstep"/></svg></div>
    <div class="tc u25"><svg width="18" height="18"><use href="#t-link"/></svg></div>
    <div class="tc u25"><svg width="18" height="18"><use href="#t-hex"/></svg></div>
    <div class="combo cb-129 ms-1"><select class="form-select"><option>内侧</option></select></div>
    <div class="tc tc-on u23 ms-2"><svg width="18" height="18"><use href="#t-corner"/></svg></div>
    <div class="tc tc-on u23"><svg width="18" height="18"><use href="#t-midbar"/></svg></div>
    <div class="tc u26"><svg width="17" height="17"><use href="#t-redcube"/></svg></div>
    <div class="tc u24"><svg width="18" height="18"><use href="#t-sheet"/></svg></div>
    <div class="vsep ms-2"></div>
    <div class="tc u24 ms-2"><svg width="19" height="19"><use href="#t-w-zoom"/></svg></div>
    <div class="tc u24"><svg width="19" height="19"><use href="#t-w-pan"/></svg></div>
    <div class="tc u24"><svg width="19" height="19"><use href="#t-w-rot"/></svg></div>
    <div class="tc u26"><svg width="18" height="18"><use href="#t-cubed"/></svg></div>
    <div class="tc u24"><svg width="18" height="18"><use href="#t-cubes"/></svg></div>
    <div class="tc u26"><svg width="19" height="19"><use href="#t-w-fit"/></svg></div><i class="car-d ms-1"></i>
    <div class="tc u24 ms-1"><svg width="18" height="18"><use href="#t-shade"/></svg></div><i class="car-d ms-1"></i>
    <div class="tc u28 ms-1"><svg width="18" height="18"><use href="#t-cyl"/></svg></div><i class="car-d ms-1"></i>
    <div class="tc u24 ms-1"><svg width="18" height="18"><use href="#t-eyelist"/></svg></div><i class="car-d ms-1"></i>
    <div class="vsep ms-2"></div>
    <div class="tc u26 ms-2"><svg width="18" height="18"><use href="#t-axis"/></svg></div><i class="car-d ms-1"></i>
    <div class="tc u30"><svg width="18" height="18"><use href="#t-ogear"/></svg></div>
    <div class="tc u20"><svg width="17" height="17"><use href="#t-ruler"/></svg></div>
    <div class="vsep ms-2"></div>
    <i class="car-d ms-auto me-1"></i>
</section>

<main class="workspace d-flex">
    <aside class="side-rail d-flex flex-column">
        <div class="rail-i rt-1"><svg width="16" height="16" viewBox="0 0 16 16"><circle cx="8" cy="8" r="5" fill="none" stroke="#222" stroke-width="1.800"/><circle cx="8" cy="8" r="7" fill="none" stroke="#222" stroke-width="1.500" stroke-dasharray="2 3.500"/></svg></div>
        <div class="rail-i rt-2"><svg width="20" height="24" viewBox="0 0 20 24"><path d="M2 8l8-3 0-2 5-2 4 2v7l-8 3v7l-5 3-4-3z" fill="#d8d8d8" stroke="#555"/><path d="M2 8l4 2v13M6 10l5-2v7M2 15l4 2 5-2M10 5l4 2 5-3M14 7v6" fill="none" stroke="#555"/></svg></div>
        <div class="rail-i rt-3"><svg width="26" height="26"><use href="#t-part"/></svg></div>
        <div class="rail-i rt-4"><svg width="24" height="24" viewBox="0 0 24 24"><rect x=".5" y=".5" width="23" height="23" fill="#fff" stroke="#444"/><path d="M0 4h24M15 2h1M18 2h1M21 2h1" stroke="#444"/><circle cx="12" cy="14" r="8" fill="#2b88ad"/><path d="M7 9c3 1 5 0 6 2s-3 4-5 3-2-3-1-5zM14 16c2-1 4-1 5 0-1 3-3 4-4 3z" fill="#bcdde8"/></svg></div>
        <div class="rail-i rt-5"><svg width="24" height="24" viewBox="0 0 24 24"><circle cx="12" cy="12" r="11" fill="none" stroke="#444" stroke-width="1.100"/><path d="M12 4v8H5M12 21v2M1 12h2M21 12h2M12 1v2" fill="none" stroke="#444"/></svg></div>
        <div class="rail-i rt-6"><svg width="24" height="24" viewBox="0 0 24 24"><path d="M2 3h9v2h11v18H2z" fill="#fff" stroke="#444"/><path d="M6 21 18 9M18 21 6 9" stroke="#4f8f9c" stroke-width="2.500"/><circle cx="18" cy="9" r="3" fill="#4f8f9c"/><circle cx="6" cy="9" r="3" fill="#7a8f94"/></svg></div>
        <div class="rail-slider"></div>
    </aside>
    <div class="work-col flex-grow-1">
        <div class="doc-strip d-flex">
            <div class="doc-tab d-flex align-items-center">
                <svg width="18" height="18"><use href="#t-part"/></svg><span>8.prt</span><span class="doc-x">✕</span>
            </div>
        </div>
        <div class="view-area">
            <svg viewBox="39 205 1881 812">
                <!-- spring, drawn bottom turn first; helix pitch is 378 units in this group -->
                <defs>
                    <clipPath id="holeClip"><ellipse cx="781" cy="356" rx="553.500" ry="239"/></clipPath>
                    <path id="faceShape" d="M70,945 C85,905 125,875 170,848 L1300,640 L1478,487 C1490,520 1495,555 1490,594 C1485,625 1470,660 1450,695 C1430,725 1400,765 1350,805 C1320,835 1270,860 1200,905 C1110,965 1000,1010 880,1040 C760,1070 640,1090 500,1090 C340,1090 230,1075 160,1045 C100,1020 75,975 70,945 Z"/>
                    <path id="holeShape" d="M225,945 C240,990 340,1028 500,1028 C700,1028 850,985 955,945 C1030,915 1100,885 1145,855 C1205,815 1270,745 1315,675 L1300,660 L1000,700 L300,860 C260,880 225,910 225,945 Z"/>
                    <path id="wallShape" d="M70,945 C75,975 100,1020 160,1045 C230,1075 340,1090 500,1090 C640,1090 760,1070 880,1040 C1000,1010 1110,965 1200,905 C1270,860 1320,835 1350,805 C1400,765 1430,725 1450,695 C1470,660 1485,625 1490,594 C1494,640 1494,740 1492,780 L1478,865 C1450,908 1390,978 1340,1028 C1310,1058 1270,1086 1230,1108 C1180,1138 1125,1160 1060,1183 C1010,1203 960,1213 900,1228 C850,1242 790,1253 720,1263 C650,1275 580,1280 500,1280 C440,1280 370,1275 300,1263 C180,1243 85,1188 70,1138 Z"/>
                    <path id="edgeLine" d="M75,965 C85,995 110,1025 160,1050 C230,1080 340,1095 500,1095 C640,1095 760,1075 880,1045 C1000,1015 1110,970 1200,910 C1270,865 1320,840 1350,810 C1400,770 1430,730 1450,700 C1470,665 1483,640 1488,610"/>
                    <g id="turnFill">
                        <use href="#faceShape" class="face sk"/>
                        <use href="#holeShape" class="inner sk"/>
                        <path d="M725,880 L900,845 L1055,903 L955,945 Z" class="face sk"/>
                        <path d="M890,840 L1060,795 L1145,855 L1055,903 Z" fill="#fff" class="sk"/>
                        <path d="M1050,790 L1235,715 L1258,760 L1145,855 L1060,805 Z" fill="#6f797a" class="sk"/>
                        <path d="M1225,720 L1325,650 L1315,675 C1300,710 1280,735 1258,760 Z" class="face sk"/>
                    </g>
                </defs>
                <g transform="translate(680,240) scale(.38266,.33333)">
                    <!-- slot at the foot -->
                    <path d="M1160,1975 L1240,2045 C1290,2015 1325,1995 1350,1970 C1400,1925 1430,1885 1450,1850 C1470,1805 1485,1765 1490,1730 C1494,1700 1490,1650 1478,1615 L1340,1784 L1280,1880 Z" class="face sk"/>
                    <path d="M1160,1975 C1158,1930 1180,1890 1215,1870 C1255,1843 1290,1830 1315,1810 C1305,1850 1285,1880 1250,1905 C1220,1935 1190,1950 1160,1975 Z" fill="#fff" class="sk"/>
                    <path d="M1160,1975 L1240,2045 L1215,2055 C1185,2045 1165,2010 1160,1975 Z" fill="#8a9596" class="sk"/>

                    <!-- lowest turn: mostly open behind the hole -->
                    <g transform="translate(0,756)">
                        <use href="#faceShape" class="face sk"/>
                        <use href="#holeShape" fill="#fff" class="sk"/>
                        <path d="M225,945 C228,969 260,989 295,999 C350,944 430,914 510,894 L300,854 Z" class="inner sk"/>
                        <path d="M780,879 C880,879 980,884 1055,903 C1100,885 1205,815 1258,760 L1235,715 L700,844 Z" fill="url(#darkG)" class="sk"/>
                        <path d="M1225,720 L1325,650 L1315,675 C1300,710 1280,735 1258,760 Z" class="face sk"/>
                    </g>
                    <path d="M70,1701 C75,1731 100,1776 160,1801 C230,1831 340,1846 500,1846 C640,1846 760,1826 880,1796 C1000,1766 1110,1721 1200,1661 C1270,1616 1320,1591 1350,1561 C1400,1521 1430,1481 1450,1451 C1470,1416 1485,1381 1490,1350 C1494,1396 1494,1496 1492,1536 L1478,1621 C1450,1664 1390,1734 1340,1784 L1315,1810 C1290,1830 1255,1843 1215,1870 C1180,1890 1158,1930 1160,1975 C1160,2010 1175,2040 1215,2055 L1240,2045 C1290,2015 1325,1995 1350,1970 C1400,1925 1430,1885 1450,1850 C1470,1805 1485,1765 1490,1730 C1494,1790 1494,1840 1492,1870 A711,306 0 0 1 70,1870 Z" class="wall sk"/>
                    <use href="#edgeLine" y="756" class="sk2"/>
                    <path d="M1245,2040 C1295,2010 1330,1990 1355,1965 C1405,1920 1435,1880 1455,1845 C1473,1805 1485,1770 1488,1745" class="sk2"/>

                    <!-- third and second turn -->
                    <g transform="translate(0,378)">
                        <use href="#turnFill"/>
                        <use href="#wallShape" class="wall sk"/>
                        <use href="#edgeLine" class="sk2"/>
                    </g>
                    <use href="#turnFill"/>
                    <path d="M1478,487 C1490,530 1488,620 1475,665 L1345,652 L1340,650 C1390,600 1450,530 1478,487 Z" fill="url(#slitG)" class="sk"/>
                    <use href="#wallShape" class="wall sk"/>
                    <use href="#edgeLine" class="sk2"/>

                    <!-- top turn -->
                    <path d="M70,356 L70,760 C85,810 180,865 300,885 C370,897 440,902 500,902 C580,902 650,897 720,885 C790,875 850,864 900,850 C960,835 1010,825 1060,805 C1125,782 1180,760 1230,730 C1270,708 1310,680 1340,650 C1390,600 1450,530 1478,487 C1481,500 1486,560 1484,620 L1492,620 L1492,356 Z" class="wall sk"/>
                    <g clip-path="url(#holeClip)">
                        <rect x="220" y="110" width="1120" height="500" class="inner"/>
                        <path d="M236,355 C300,305 420,298 520,300 C720,308 1000,395 1195,513 L1195,700 L200,700 Z" fill="#fff" class="sk"/>
                        <path d="M270,445 C420,425 560,425 700,445 C850,470 1000,505 1115,545 L1000,700 L300,700 Z" class="face sk"/>
                        <path d="M340,500 C420,485 520,485 640,497 C780,515 900,550 980,578 L900,700 L340,700 Z" class="inner sk"/>
                    </g>
                    <path d="M70,356 A711,306 0 1 1 1492,356 A711,306 0 1 1 70,356 Z M227.500,356 A553.500,239 0 1 0 1334.500,356 A553.500,239 0 1 0 227.500,356 Z" fill-rule="evenodd" class="face sk"/>
                </g>

                <!-- work csys -->
                <path class="csys" d="M978.500,743V863M978.500,801 1031,785M978.500,801 1021,818V883M978.500,863 1021,883 1073,867 1031,847 978.500,863M1031,785V847M1021,883 1063,902M1031,847 1081,832"/>
                <polygon points="978.500,742 976,755 981,755" fill="#c0c4c4"/>
                <polygon points="1080,832 1069,831 1071,838" fill="#e3e6e6"/>
                <polygon points="1063,901 1054,895 1051,900" fill="#e3e6e6"/>
                <text x="975" y="738" class="csys-txt">Z</text>
                <text x="1084" y="835" class="csys-txt">Y</text>
                <text x="1063" y="908" class="csys-txt">X</text>

                <!-- view triad -->
                <path d="M116,888 149,878 175,890 142,900ZM116,888V927L142,939V900M142,939 175,928V890" fill="none" stroke="#c4c4c4"/>
                <path d="M145,889V858" stroke="#0b45d8" stroke-width="5"/>
                <polygon points="145,842 150,860 140,860" fill="#0b45d8"/>
                <path d="M175,900 194,894" stroke="#2d9a3c" stroke-width="4"/>
                <polygon points="203,891 188,890 191,899" fill="#2d9a3c"/>
                <path d="M157,914 178,924" stroke="#d23a38" stroke-width="5"/>
                <polygon points="192,930 176,918 171,929" fill="#d23a38"/>
                <text x="141" y="837" class="tri-txt" fill="#2a63e6">Z</text>
                <text x="205" y="893" class="tri-txt" fill="#3aa84a">Y</text>
                <text x="193" y="938" class="tri-txt" fill="#e0454a">X</text>
            </svg>
        </div>
    </div>
</main>

<div class="status-row">选择对象并使用 MB3，或者双击某一对象</div>

<footer class="task-row d-flex align-items-center">
    <div class="tk tk-start"><svg width="16" height="16" viewBox="0 0 16 16"><path d="M0 2.500 6.500 1.600V7.500H0zM7.500 1.500 16 .3V7.500H7.500zM0 8.500H6.500V14.400L0 13.500zM7.500 8.500H16v7.200L7.500 14.500z" fill="#fff"/></svg></div>
    <div class="tk tk-edge"><svg width="20" height="20" viewBox="0 0 20 20"><path d="M2 11C2 5 6 1 11 1c5 0 8 4 8 10H7c0 4 6 5 11 2v4c-6 3-16 2-16-6zM7 8h7c0-4-6-4-7 0z" fill="#0f7ad8"/></svg></div>
    <div class="tk tk-files"><svg width="22" height="20" viewBox="0 0 22 20"><path d="M1 2h7l2 2h11v15H1z" fill="#f4c453"/><path d="M1 2h7l2 2H1z" fill="#d99a1c"/><rect x="7" y="11" width="8" height="8" fill="#2f8fe0"/><rect x="9.500" y="14" width="3" height="5" fill="#f4c453"/></svg></div>
    <div class="tk tk-nx"><svg width="24" height="24" viewBox="0 0 24 24"><path d="M1 4h3v17h19v2H1z" fill="#0e9a9c"/><rect x="4" y="1" width="20" height="20" fill="#8c1512"/><text x="14" y="15" text-anchor="middle" font-family="Liberation Sans" font-weight="bold" font-size="10" fill="#fff">NX</text></svg></div>
    <div class="tk tk-ie"><svg width="22" height="22" viewBox="0 0 22 22"><circle cx="11" cy="11" r="9.500" fill="#7fbf2f" stroke="#fff"/><path d="M5 10h11M6 14c2 3 7 3 10 0M6 8c2-3 7-3 9 0" fill="none" stroke="#fff" stroke-width="1.700"/><path d="M5 3c6-4 13-1 14 1" fill="none" stroke="#2f9a3c"/></svg></div>
    <div class="tray ms-auto">
        <div class="tray-ic d-flex align-items-center">
            <svg width="12" height="8" viewBox="0 0 12 8"><path d="M1 7l5-5 5 5" fill="none" stroke="#fff"/></svg>
            <svg width="16" height="14" viewBox="0 0 16 14"><path d="M1 5h3l4-4v12L4 9H1zM10 4c1 2 1 4 0 6M12 2c2 3 2 7 0 10" fill="none" stroke="#fff"/></svg>
            <span class="tray-han">中</span>
        </div>
        <div class="clock-t">12:53</div>
        <div class="clock-d">2020/8/10</div>
        <div class="desk-edge"></div>
    </div>
</footer>

<svg class="mark-hex" width="72" height="82" viewBox="0 0 72 82">
    <polygon points="35.500,0 49,8 53,32 35.500,22 14,22 0,20" fill="#8fd0f5" opacity=".38"/>
    <polygon points="49,8 71,20 71,64 59,71 53,32" fill="#49b5f0" opacity=".58"/>
    <polygon points="0,20 14,22 18,47 16,55 0,63" fill="#6ec4f2" opacity=".5"/>
    <polygon points="0,63 16,50 33,70 59,71 35.500,82" fill="#1e8fd6" opacity=".55"/>
    <polygon points="16,50 53,32 59,71 33,70" fill="#5ab8ee" opacity=".42"/>
    <polygon points="35.500,23 52,32 51,50 35.500,58 20,50 20,32" fill="#fff" opacity=".9"/>
    <polygon points="35.500,28 48,35 35.500,42 23,35" fill="#bde4fa"/>
    <polygon points="23,35 35.500,42 35.500,56 23,49" fill="#a4dbf9"/>
    <polygon points="35.500,42 48,35 48,49 35.500,56" fill="#7cc8f0"/>
</svg>
<div class="mark-url">WWW.3DSJW.COM</div>
</body>
</html>
